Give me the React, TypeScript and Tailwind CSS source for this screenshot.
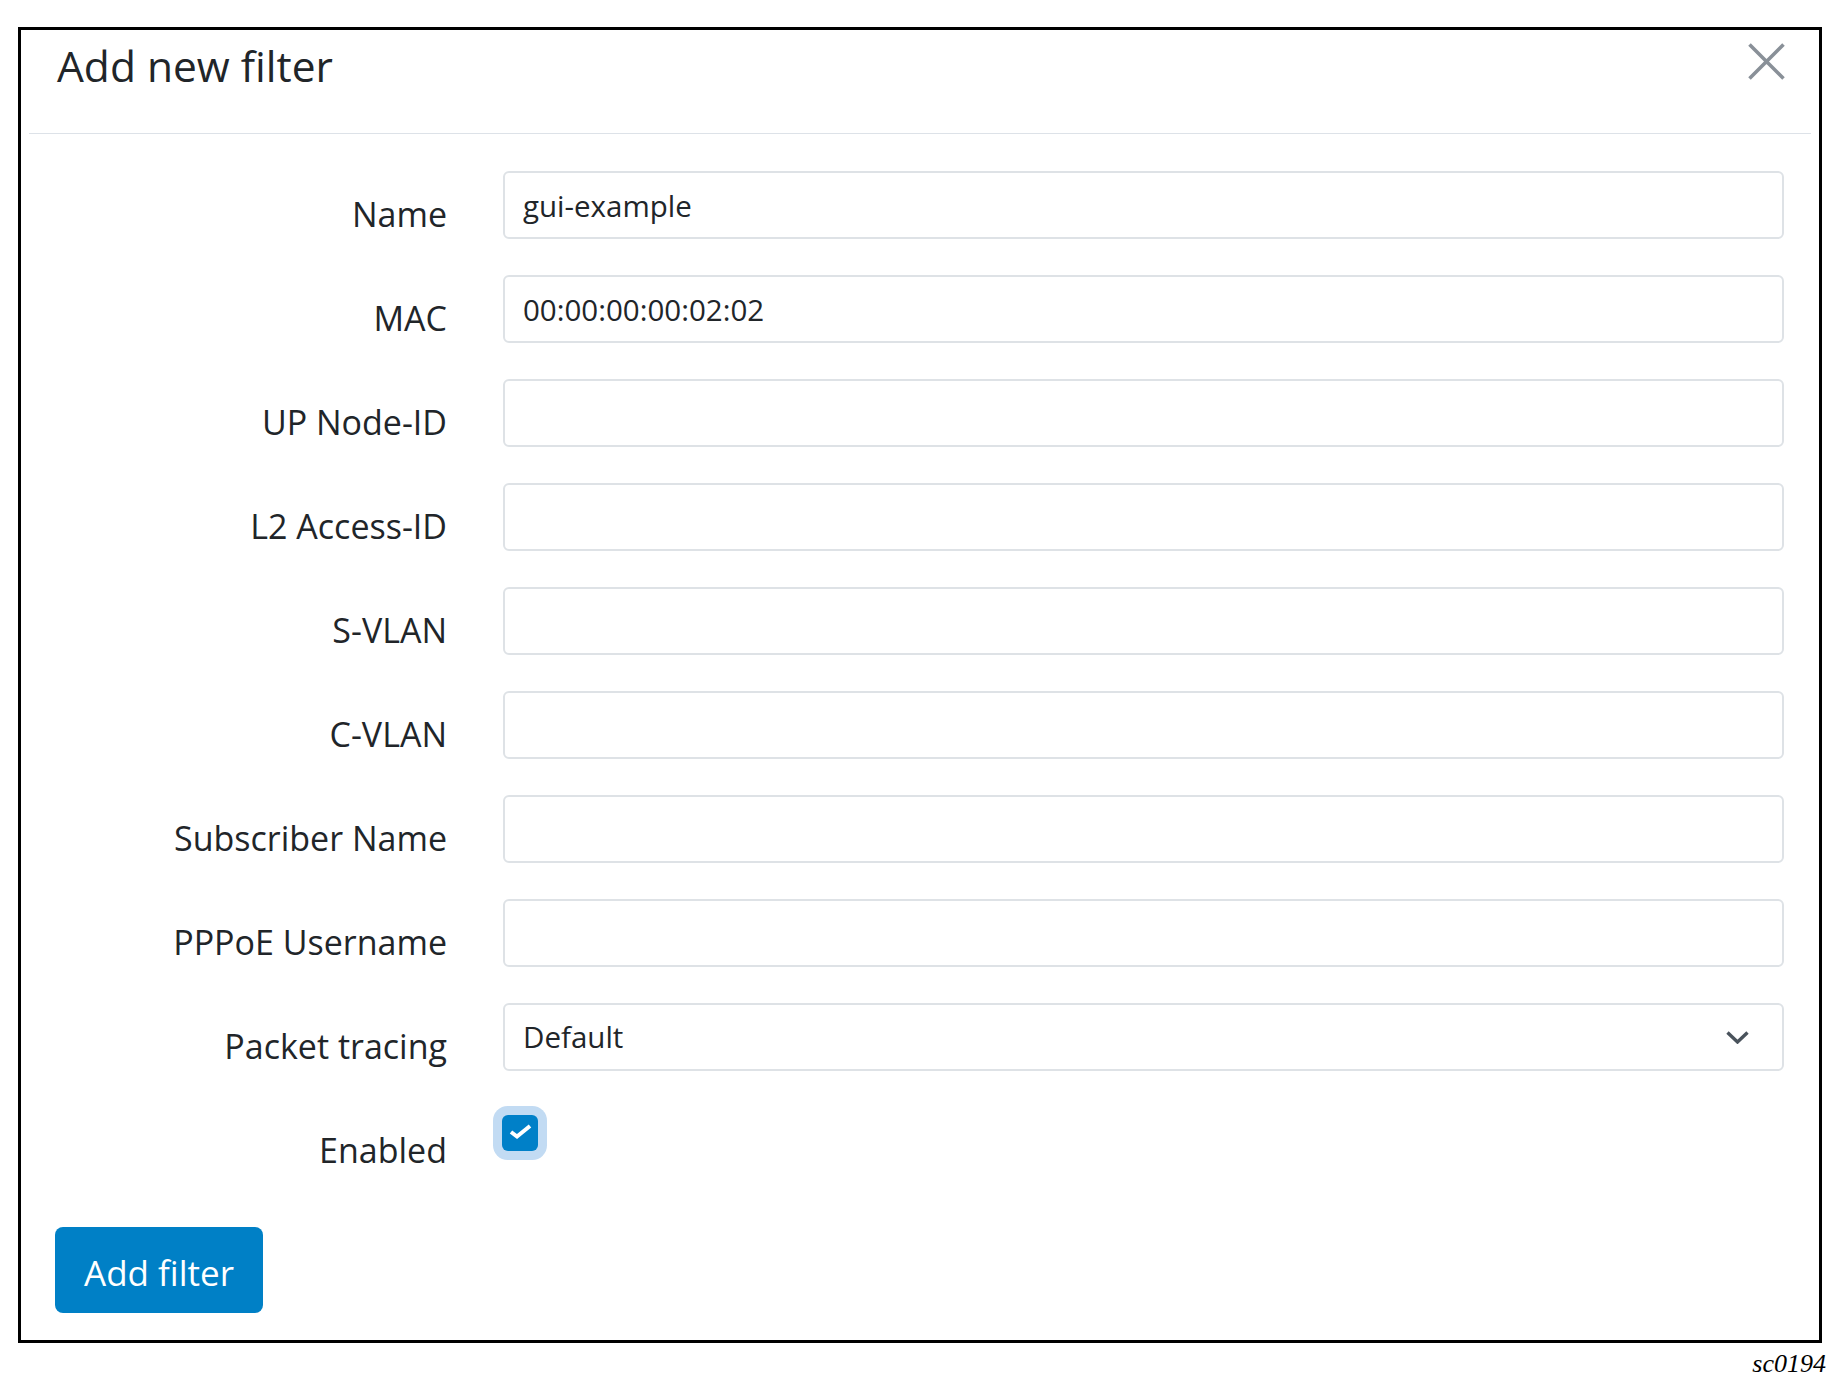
import React from "react";

const font = { fontFamily: '"Open Sans", "Noto Sans", sans-serif' };

function Label({ children }: { children: React.ReactNode }) {
  return (
    <div className="w-[418px] h-[68px] shrink-0 text-right text-[34px] leading-[49px] pt-[19px] text-[#212529] whitespace-nowrap">
      {children}
    </div>
  );
}

function TextRow({ label, value }: { label: string; value?: string }) {
  return (
    <div className="flex items-start h-[68px]">
      <Label>{label}</Label>
      <div className="ml-[56px] mr-[27px] flex-1">
        <input
          type="text"
          defaultValue={value ?? ""}
          readOnly
          className="block w-full h-[68px] border-2 border-[#dee2e6] rounded-[6px] bg-white pl-[18px] pr-[18px] text-[29.5px] text-[#212529] outline-none"
        />
      </div>
    </div>
  );
}

export default function App() {
  const rows: { label: string; value?: string }[] = [
    { label: "Name", value: "gui-example" },
    { label: "MAC", value: "00:00:00:00:02:02" },
    { label: "UP Node-ID" },
    { label: "L2 Access-ID" },
    { label: "S-VLAN" },
    { label: "C-VLAN" },
    { label: "Subscriber Name" },
    { label: "PPPoE Username" },
  ];

  return (
    <div className="min-h-[1384px] bg-white" style={font}>
      <div className="pt-[27px] pl-[18px] w-[1824px]">
        <div className="w-[1804px] border-[3px] border-black bg-white">
          <div className="px-[8px]">
            {/* Header */}
            <div className="flex items-start justify-between h-[104px] border-b border-[#dde2e8]">
              <h4 className="pl-[28px] pt-[11px] text-[42.5px] leading-[50px] font-normal text-[#212529]">
                Add new filter
              </h4>
              <button className="mt-[13px] mr-[26px] w-[37px] h-[37px]" aria-label="Close">
                <svg width="37" height="37" viewBox="0 0 37 37">
                  <path d="M1.5 1.5 L35.5 35.5 M35.5 1.5 L1.5 35.5" stroke="#899098" strokeWidth="3.6" fill="none" />
                </svg>
              </button>
            </div>

            {/* Form */}
            <div className="pt-[37px] flex flex-col gap-[36px]">
              {rows.map((r) => (
                <TextRow key={r.label} label={r.label} value={r.value} />
              ))}

              <div className="flex items-start h-[68px]">
                <Label>Packet tracing</Label>
                <div className="ml-[56px] mr-[27px] flex-1">
                  <div className="flex items-center justify-between w-full h-[68px] border-2 border-[#dee2e6] rounded-[6px] bg-white pl-[18px] pr-[33px] text-[29.5px] text-[#212529]">
                    <span>Default</span>
                    <svg width="23" height="13" viewBox="0 0 23 13">
                      <path d="M1.5 1.5 L11.5 11 L21.5 1.5" stroke="#4a535c" strokeWidth="3.4" fill="none" />
                    </svg>
                  </div>
                </div>
              </div>

              <div className="flex items-start h-[68px]">
                <Label>Enabled</Label>
                <div className="ml-[55px] pt-[8px] h-[68px]">
                  <div className="w-[36px] h-[36px] rounded-[6px] bg-[#0080c8] shadow-[0_0_0_9px_#c2dbf3]">
                    <svg width="36" height="36" viewBox="0 0 36 36">
                      <path d="M9 17 L15 21.5 L28 11" stroke="#ffffff" strokeWidth="4" fill="none" />
                    </svg>
                  </div>
                </div>
              </div>
            </div>

            {/* Footer */}
            <div className="pt-[52px] pb-[27px] pl-[26px]">
              <button className="h-[86px] w-[208px] rounded-[8px] bg-[#0080c6] text-white text-[35px] leading-[81px] pt-[5px] text-center">
                Add filter
              </button>
            </div>
          </div>
        </div>
        <div
          className="text-right italic text-[26px] leading-[29px] mt-[6px] mr-[-2px] text-black"
          style={{ fontFamily: '"Liberation Serif", serif' }}
        >
          sc0194
        </div>
      </div>
    </div>
  );
}
